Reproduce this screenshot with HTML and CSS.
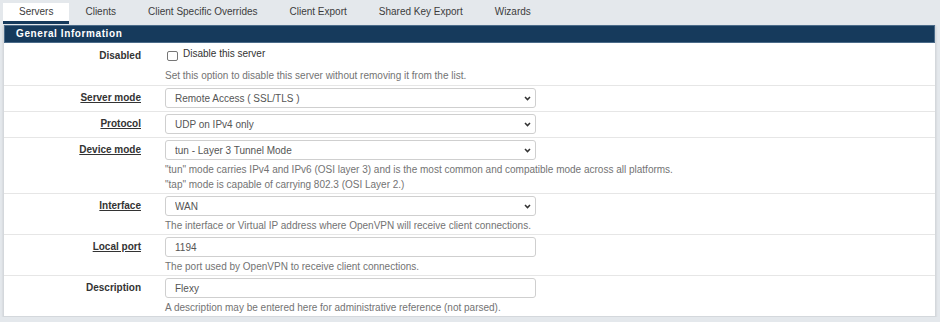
FILE: index.html
```html
<!DOCTYPE html>
<html lang="en">
<head>
  <meta charset="UTF-8">
  <meta name="viewport" content="width=device-width, initial-scale=1.0">
  <title>OpenVPN Servers</title>
  <link rel="stylesheet" href="styles.css">
</head>
<body>
  <ul class="tabs">
    <li class="tab active">Servers</li>
    <li class="tab">Clients</li>
    <li class="tab">Client Specific Overrides</li>
    <li class="tab">Client Export</li>
    <li class="tab">Shared Key Export</li>
    <li class="tab">Wizards</li>
  </ul>

  <div class="panel">
    <h2 class="panel-title">General Information</h2>

    <div class="row first">
      <span class="label">Disabled</span>
      <div class="field">
        <label class="check"><input type="checkbox"><span>Disable this server</span></label>
        <p class="help">Set this option to disable this server without removing it from the list.</p>
      </div>
    </div>

    <div class="row compact">
      <span class="label link">Server mode</span>
      <div class="field">
        <div class="select">
          <select><option>Remote Access ( SSL/TLS )</option></select>
          <svg class="caret" viewBox="0 0 7 5"><path d="M1 1 L3.5 3.6 L6 1"/></svg>
        </div>
      </div>
    </div>

    <div class="row compact">
      <span class="label link">Protocol</span>
      <div class="field">
        <div class="select">
          <select><option>UDP on IPv4 only</option></select>
          <svg class="caret" viewBox="0 0 7 5"><path d="M1 1 L3.5 3.6 L6 1"/></svg>
        </div>
      </div>
    </div>

    <div class="row">
      <span class="label link">Device mode</span>
      <div class="field">
        <div class="select">
          <select><option>tun - Layer 3 Tunnel Mode</option></select>
          <svg class="caret" viewBox="0 0 7 5"><path d="M1 1 L3.5 3.6 L6 1"/></svg>
        </div>
        <p class="help">"tun" mode carries IPv4 and IPv6 (OSI layer 3) and is the most common and compatible mode across all platforms.<br>"tap" mode is capable of carrying 802.3 (OSI Layer 2.)</p>
      </div>
    </div>

    <div class="row">
      <span class="label link">Interface</span>
      <div class="field">
        <div class="select">
          <select><option>WAN</option></select>
          <svg class="caret" viewBox="0 0 7 5"><path d="M1 1 L3.5 3.6 L6 1"/></svg>
        </div>
        <p class="help">The interface or Virtual IP address where OpenVPN will receive client connections.</p>
      </div>
    </div>

    <div class="row">
      <span class="label link">Local port</span>
      <div class="field">
        <input class="input" type="text" value="1194">
        <p class="help">The port used by OpenVPN to receive client connections.</p>
      </div>
    </div>

    <div class="row">
      <span class="label">Description</span>
      <div class="field">
        <input class="input" type="text" value="Flexy">
        <p class="help">A description may be entered here for administrative reference (not parsed).</p>
      </div>
    </div>
  </div>
</body>
</html>
```

FILE: styles.css
```css
* { margin: 0; padding: 0; box-sizing: border-box; }

body {
  font-family: "Liberation Sans", Arial, sans-serif;
  font-size: 10px;
  color: #333;
  background-color: #e4e8ec;
  padding: 3px 4px 0 3px;
  overflow: hidden;
}

/* tab strip */
.tabs {
  display: flex;
  list-style: none;
  margin-bottom: 1px;
}

.tab {
  padding: 0 16px;
  height: 21px;
  line-height: 18px;
  color: #3c3c3c;
  border-bottom: 3px solid transparent;
}

.tab.active {
  background-color: #fff;
  border-bottom-color: #163a5c;
}

/* panel */
.panel {
  background-color: #fff;
  border: 1px solid #d4d8dc;
  border-top: none;
  box-shadow: 0 1px 2px rgba(0, 0, 0, 0.12);
}

.panel-title {
  background-color: #163a5c;
  border: 1px solid #4b6b89;
  color: #fff;
  font-size: 10px;
  font-weight: bold;
  letter-spacing: 0.6px;
  line-height: 16px;
  padding: 0 11px;
}

.row {
  display: grid;
  grid-template-columns: 137px 1fr;
  column-gap: 24px;
  border-top: 1px solid #e6e6e6;
  padding: 2px 0 1px;
}

.row.first {
  border-top: none;
  padding: 3px 0 2px;
}

.row.compact {
  padding-bottom: 3px;
}

.label {
  text-align: right;
  font-weight: bold;
  line-height: 20px;
  color: #333;
}

.label.link {
  text-decoration: underline;
}

.help {
  margin-top: 2px;
  line-height: 15px;
  color: #737373;
}

/* checkbox line */
.check {
  display: flex;
  align-items: flex-start;
  height: 20px;
  color: #333;
}

.check input {
  appearance: none;
  width: 11px;
  height: 10px;
  margin: 5px 5px 0 2px;
  border: 1px solid #767676;
  border-radius: 2px;
  background-color: #fff;
}

.check span {
  line-height: 15px;
}

/* form controls */
.select {
  position: relative;
  width: 371px;
}

.select select,
.input {
  appearance: none;
  display: block;
  width: 371px;
  height: 20px;
  padding: 0 20px 0 9px;
  border: 1px solid #cfcfcf;
  border-radius: 3px;
  background-color: #fff;
  font-family: inherit;
  font-size: 10px;
  color: #555;
  outline: none;
}

.caret {
  position: absolute;
  right: 5px;
  top: 8px;
  width: 7px;
  height: 5px;
  fill: none;
  stroke: #333;
  stroke-width: 1.5;
  pointer-events: none;
}
```
